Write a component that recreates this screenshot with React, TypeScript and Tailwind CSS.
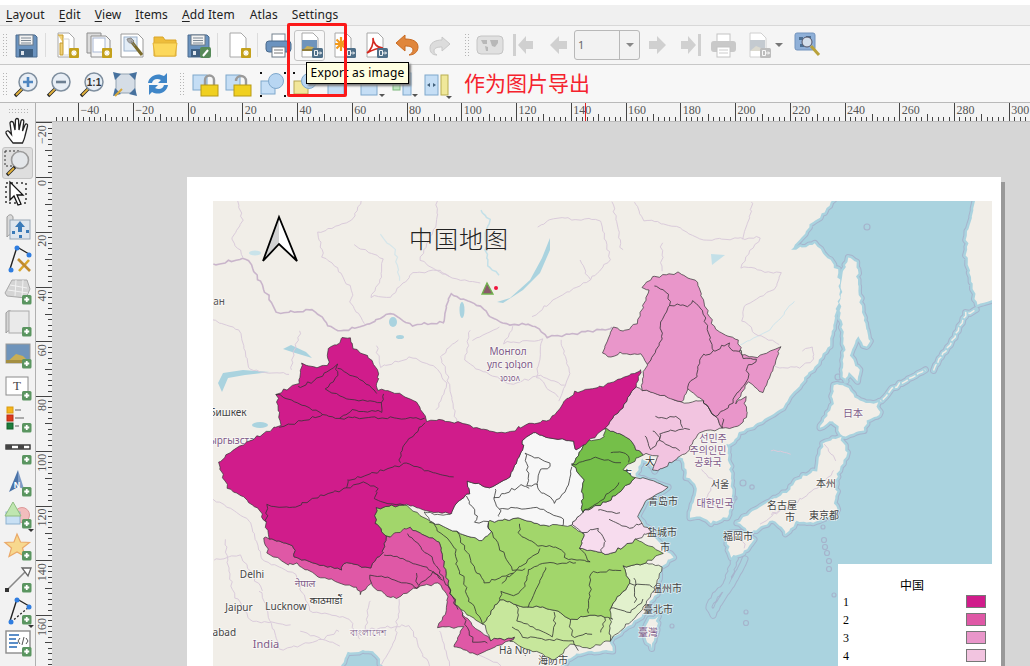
import React from 'react';

const noise = (x: number, y: number, s: number) =>
  Math.sin(x * 0.9 + y * 0.4 + s) * 0.6 + Math.sin(x * 0.31 - y * 0.77 + s * 2) * 0.8 + Math.sin(x * 1.7 + y * 1.3 + s * 3) * 0.35;

// coarse outlines get a small position based wobble, shared edges stay identical
const pts = (p: number[][], closed = true) => {
  const out: string[] = [];
  const last = closed ? p.length : p.length - 1;
  for (let i = 0; i < last; i++) {
    const a = p[i];
    const b = p[(i + 1) % p.length];
    const n = Math.max(1, Math.ceil(Math.hypot(b[0] - a[0], b[1] - a[1]) / 4));
    for (let k = 0; k < n; k++) {
      const x = a[0] + ((b[0] - a[0]) * k) / n;
      const y = a[1] + ((b[1] - a[1]) * k) / n;
      out.push(`${(x + noise(x, y, 1)).toFixed(1)},${(y + noise(x, y, 2)).toFixed(1)}`);
    }
  }
  if (!closed) {
    const e = p[p.length - 1];
    out.push(`${(e[0] + noise(e[0], e[1], 1)).toFixed(1)},${(e[1] + noise(e[0], e[1], 2)).toFixed(1)}`);
  }
  return out.join(' ');
};

const LAND = [[205,195],[835,195],[825,212],[810,225],[795,246],[792,250],[803,247],[815,244],[825,255],[838,270],[840,290],[838,305],[833,325],[830,345],[820,360],[805,378],[780,410],[755,425],[740,432],[735,440],[727,445],[730,470],[733,497],[727,517],[710,523],[700,517],[690,517],[697,487],[687,477],[683,457],[667,455],[655,470],[642,457],[635,477],[668,488],[647,500],[637,517],[650,530],[663,548],[673,557],[660,567],[657,593],[640,617],[610,640],[613,650],[577,653],[553,672],[387,672],[373,650],[347,653],[340,672],[205,672]];
const ISLANDS = [
  [[978,192],[972,215],[967,232],[967,258],[972,285],[977,305],[998,298],[998,192]],
  [[848,258],[857,263],[858,287],[863,313],[870,342],[867,347],[857,337],[850,357],[860,370],[857,380],[848,373],[845,382],[842,370],[845,350],[840,310],[842,273]],
  [[833,385],[845,387],[863,403],[877,403],[880,415],[867,420],[863,430],[843,437],[833,420],[820,428],[833,403]],
  [[840,437],[847,453],[837,473],[835,503],[837,513],[813,523],[797,520],[787,533],[773,520],[750,533],[737,523],[750,513],[767,503],[790,490],[797,480],[817,470],[823,443]],
  [[727,533],[750,533],[753,540],[743,553],[730,557],[728,543]],
  [[658,617],[655,637],[652,648],[643,633],[650,620]],
];
const M1 = [[343,337],[350,338],[353,348],[367,355],[378,370],[377,390],[400,393],[417,403],[427,420],[458,422],[480,430],[508,433],[525,425],[550,420],[564,402],[575,392],[600,387],[642,370],[636,387],[628,398],[620,410],[603,430],[577,450],[573,442],[550,437],[533,433],[522,440],[523,450],[510,477],[490,488],[467,482],[470,493],[463,497],[453,508],[452,515],[427,510],[403,505],[377,508],[375,523],[387,537],[382,553],[370,567],[343,563],[340,570],[317,563],[295,557],[293,545],[270,538],[265,523],[258,508],[228,488],[218,463],[233,450],[257,437],[280,425],[277,394],[298,383],[303,363],[317,367],[328,365],[328,348],[340,343]];
const M2 = [[263,538],[270,538],[293,545],[295,557],[317,563],[340,570],[343,563],[370,567],[382,553],[387,537],[410,527],[440,543],[447,577],[450,593],[460,610],[467,620],[490,640],[515,638],[477,655],[453,647],[462,627],[438,627],[447,610],[447,593],[438,583],[417,587],[397,598],[387,597],[370,583],[360,595],[357,587],[317,577],[297,563],[287,565],[268,553]];
const G2 = [[377,508],[403,505],[430,520],[457,532],[483,540],[490,532],[487,522],[517,518],[537,525],[570,525],[585,533],[580,547],[608,555],[635,540],[662,553],[645,563],[623,567],[630,583],[610,607],[612,620],[605,617],[590,615],[570,620],[558,610],[517,605],[500,600],[483,623],[460,610],[450,593],[447,577],[440,543],[410,527],[405,535],[387,537],[375,523]];
const G3 = [[483,623],[500,600],[517,605],[558,610],[570,620],[590,615],[605,617],[612,600],[610,640],[590,648],[570,645],[555,660],[540,652],[530,650],[510,640],[515,638],[490,640]];
const G4 = [[610,607],[630,583],[623,567],[645,563],[662,567],[653,590],[640,613],[610,640]];
const G1 = [[605,427],[627,437],[642,455],[628,465],[622,470],[635,478],[610,500],[582,512],[583,480],[573,465],[585,442],[603,438]];
const W = [[522,440],[533,433],[550,437],[573,442],[577,450],[585,442],[573,465],[583,480],[582,512],[572,525],[537,525],[517,518],[487,522],[490,532],[483,540],[457,532],[433,522],[423,513],[450,515],[453,508],[463,497],[470,493],[467,482],[490,488],[510,477],[523,450]];
const P3 = [[603,352],[613,328],[623,332],[637,323],[650,290],[643,287],[652,277],[677,273],[697,282],[707,310],[715,330],[738,340],[742,355],[757,357],[780,347],[772,370],[763,392],[748,383],[735,403],[745,397],[747,417],[737,427],[723,428],[715,417],[703,400],[687,390],[682,403],[642,390],[643,372],[648,363],[640,355],[620,353],[612,357]];
const P4 = [[642,390],[685,403],[703,400],[715,417],[723,428],[700,432],[687,453],[682,455],[660,470],[653,470],[658,455],[642,455],[627,437],[605,427],[620,410],[628,398],[636,387]];
const P5 = [[635,478],[650,480],[668,488],[647,500],[637,517],[650,532],[635,540],[608,555],[580,547],[585,533],[572,525],[582,512],[610,500]];
const LINES = [
  [[337,365],[315,380],[298,388]],[[337,365],[337,375],[326,390],[343,398],[382,403],[382,412],[353,410],[340,418]],
  [[338,367],[360,380],[377,392]],[[382,403],[383,393]],[[277,394],[323,415],[340,418],[425,418]],[[280,427],[323,415]],
  [[425,423],[402,447],[400,463]],[[350,480],[407,463],[433,472],[453,477]],[[349,480],[347,488],[363,482],[377,488],[375,500],[403,505]],
  [[347,488],[317,497],[293,508],[268,505],[265,523]],
  [[383,555],[407,560],[427,567],[440,578]],[[370,575],[370,583]],[[417,587],[433,573],[442,580]],[[370,575],[410,583],[417,587]],[[417,573],[417,585]],
  [[462,613],[473,642],[488,643]],[[407,533],[433,560],[448,587],[457,610]],
  [[430,522],[455,547],[457,567],[463,577],[468,598],[483,623]],[[457,532],[477,573],[485,583],[513,573]],[[487,523],[497,543],[513,570],[525,570]],
  [[518,535],[538,545],[563,550],[565,557],[590,563],[580,547]],[[518,535],[520,523]],[[502,583],[513,573],[540,550]],
  [[502,592],[515,595],[525,587],[528,570],[543,563],[577,563]],[[547,567],[533,597],[528,607]],[[590,573],[590,597],[587,613]],[[590,573],[620,570]],[[502,592],[500,600]],
  [[517,605],[518,620],[537,628],[553,637],[555,613]],[[570,620],[572,637],[592,633]],[[513,627],[523,637],[553,640],[573,640],[577,650]],[[605,617],[600,633]],
  [[610,607],[630,613],[643,600]],[[630,583],[653,587]],[[635,577],[635,603]],
  [[655,285],[668,295],[670,305],[688,305],[693,302],[703,310],[713,352],[700,357],[697,377],[688,383],[687,390]],[[670,305],[660,322],[662,340],[648,363]],
  [[713,352],[728,343],[733,352],[742,350],[742,358],[757,360]],[[757,360],[747,367],[748,378],[735,397],[733,403],[715,417],[703,400]],[[723,418],[723,428]],
  [[653,430],[660,440],[650,450],[645,435]],[[690,428],[660,433],[660,440],[680,450]],[[655,418],[677,417],[683,427]],
  [[610,520],[630,528],[642,523]],[[583,533],[597,528],[605,540],[600,552]],[[597,510],[620,513]],
  [[525,453],[550,462],[550,467],[540,470],[537,487],[555,503],[567,488],[572,467]],[[525,453],[528,470],[528,485],[537,485]],[[495,498],[522,485],[530,487]],
  [[495,488],[495,503],[500,508],[498,518]],[[500,508],[537,508],[563,520],[563,525]],[[467,497],[477,517],[475,522],[487,522]],
  [[572,465],[597,457],[620,463]],[[610,452],[627,453],[630,462]],[[620,483],[598,503],[582,512]],
];
const BORDERS = [[[213,265],[247,258],[277,313],[313,310],[337,332],[367,325],[390,313],[413,325],[443,323],[450,295],[480,307],[500,323],[533,325],[547,337],[600,330],[612,328]]];
const ADMIN = [
  [[237,201],[243,220],[232,240],[243,257]],[[362,201],[353,220],[318,233],[323,257],[337,268],[353,293],[350,303],[365,323]],
  [[355,245],[383,260],[380,280],[370,297],[390,297],[413,273],[440,270],[450,277],[420,260],[437,223],[437,201]],[[450,277],[480,283]],
  [[538,227],[553,218],[600,220]],[[533,317],[553,300],[590,280],[580,260]],[[457,340],[440,357],[447,373],[457,423]],[[513,327],[503,343],[542,340],[537,377],[557,397]],[[473,340],[500,327]],
  [[377,345],[380,367],[413,357],[437,367],[447,387],[437,410]],[[635,201],[643,220],[680,227],[700,240],[760,238],[740,267],[780,273],[777,287],[743,307],[743,320],[755,333],[780,345]],
  [[802,350],[813,347],[813,360],[797,368],[773,367]],[[753,201],[743,240]],[[662,243],[662,270]],[[613,201],[618,230],[622,250]],[[600,220],[610,260],[590,280]],[[213,320],[240,330],[250,370],[290,375]],[[300,330],[290,370]],[[470,330],[465,360],[480,370],[510,385],[540,375],[565,385]],[[560,340],[570,375],[560,400]],
  [[213,500],[250,520],[262,560],[295,575],[310,610],[350,620],[360,640]],[[225,540],[232,590],[250,620],[290,625]],[[260,590],[280,650],[320,640],[340,630]],[[370,600],[365,630],[410,625],[420,650],[430,666]],[[400,600],[395,640],[380,666]],[[440,630],[450,666]],[[480,655],[500,666]],[[213,560],[240,555],[262,590]],[[300,630],[340,645]],
  [[770,450],[790,455]],[[700,470],[715,480],[705,500],[720,510]],[[770,515],[800,500],[820,485],[835,470]],[[760,525],[780,510]],[[825,445],[835,460]],[[740,535],[745,548]],
];
const LABELS: [string, number, number, string, number][] = [
  ['Монгол',508,355,'#7e5a88',10],['улс ʇolʇon',510,368,'#7e5a88',10],['ʇoʇoʌ',510,381,'#7e5a88',8],['ан',219,305,'#555',10],['Бишкек',228,416,'#444',10],['ыргызста',232,444,'#7e5a88',10],
  ['Delhi',252,578,'#444',10],['नेपाल',305,587,'#7e5a88',10],['काठमाडौं',326,604,'#333',10],['Jaipur',239,611,'#444',10],['Lucknow',286,610,'#444',10],['labad',223,636,'#444',10],['India',266,648,'#7e5a88',11],['বাংলাদেশ',368,636,'#7e5a88',9],['Hà Nội',515,654,'#444',10],['海防市',553,664,'#444',10],
  ['大',650,465,'#333',10],['市',627,478,'#333',10],['선민주',713,442,'#7e5a88',10],['주의인민',708,454,'#7e5a88',10],['공화국',708,466,'#7e5a88',10],['서울',720,488,'#444',10],['대한민국',715,507,'#7e5a88',10],['青岛市',663,505,'#444',10],['盐城市',662,536,'#444',10],['市',665,551,'#444',10],['温州市',667,592,'#444',10],['臺北市',658,613,'#444',10],['臺灣',648,636,'#7e5a88',10],['福岡市',738,540,'#444',10],['名古屋',782,509,'#444',10],['市',790,521,'#444',10],['東京都',824,519,'#444',10],['本州',826,487,'#444',10],['日本',853,417,'#7e5a88',10],
];
const DOTS = [[743,483,3],[752,487,2.2],[823,527,2],[824,540,2.5],[825,547,2.5],[827,553,2.5],[829,561,2.5],[829,569,2.5],[834,595,2],[672,626,2],[746,623,2.5],[746,612,2],[867,227,3],[819,256,3],[838,377,3],[735,498,2],[772,515,1.5],[791,510,1.5]];
const TOP_TICKS = Array.from({ length: 192 }, (_, i) => i * 2 - 52);
const LEFT_TICKS = Array.from({ length: 160 }, (_, i) => i * 2 - 28);

const Plus = () => (
  <g>
    <rect x="18" y="18" width="9.500" height="9.500" rx="1.500" fill="#5a9560" />
    <path d="M22.750 20v5M20.250 22.500h5" stroke="#fff" strokeWidth="1.800" />
  </g>
);
const Gear = () => (
  <g>
    <rect x="17" y="17" width="10" height="10" rx="1" fill="#c4a11c" />
    <path d="M22 19v6M19 22h6M20 20l4 4M24 20l-4 4" stroke="#fff" strokeWidth="1.100" />
  </g>
);
const Exp = ({ grey }: { grey?: boolean }) => (
  <g>
    <rect x="16" y="17" width="11" height="10" rx="1.500" fill={grey ? '#bdbdbd' : '#4f6f88'} />
    <path d="M18.500 19.500v5M18.500 19.500h3v5h-3M21.500 22h4M24 20.500l1.500 1.500-1.500 1.500" stroke="#fff" strokeWidth="0.900" fill="none" />
  </g>
);
const Page = ({ grey }: { grey?: boolean }) => (
  <path d="M6 2h11l5 5v19H6z" fill="#fff" stroke={grey ? '#d0d0d0' : '#a8a8a8'} />
);
const Floppy = () => (
  <g>
    <path d="M4 4h19l2 2v20H4z" fill="#6b93bf" stroke="#4c6d90" />
    <rect x="7" y="4" width="14" height="10" fill="#f2f2f2" stroke="#6c7a88" />
    <path d="M9 7h10M9 9.5h10M9 12h10" stroke="#7c8894" />
    <rect x="7" y="18" width="14" height="8" fill="#3f5f80" />
    <rect x="9" y="20" width="3" height="4" fill="#dfe6ee" />
  </g>
);
const Mag = ({ children }: { children?: React.ReactNode }) => (
  <g>
    <path d="M3 26l8-8" stroke="#222" strokeWidth="3.4" />
    <path d="M4 25l6-6" stroke="#e3b23c" strokeWidth="1.8" />
    <circle cx="16" cy="12" r="9" fill="#e8eef5" stroke="#7f8f9f" strokeWidth="1.5" />
    {children}
  </g>
);

const ICONS: Record<string, React.ReactNode> = {
  save: <Floppy />,
  newl: <g><Page /><path d="M6 4h5v20h-3V12h3" fill="#f2d27a" stroke="#c49a2c" /><path d="M11 8h6v16h-6" fill="none" stroke="#d5d5d5" /><Gear /></g>,
  dup: <g><path d="M2 2h14v20H2z" fill="#dcdcdc" stroke="#8e8e8e" /><path d="M6 5h15l4 4v17H6z" fill="#f6f6f6" stroke="#8e8e8e" /><rect x="8" y="7" width="12" height="14" fill="#fff" stroke="#a9b8d4" /><Gear /></g>,
  mgr: <g><path d="M3 3h17l5 5v18H3z" fill="#fff" stroke="#9a9a9a" /><rect x="6" y="6" width="13" height="14" fill="#e2ecf6" stroke="#9cb2cc" /><path d="M13 10l11 14" stroke="#7a6a2a" strokeWidth="3" /><path d="M13 10l4 5M9 8c1 5 5 5 7 2l-3-3z" stroke="#888" fill="#aaa" /></g>,
  open: <g><path d="M3 6h9l2 3h11v16H3z" fill="#eebd3b" stroke="#d9a52a" /><path d="M2 12h24l-2 13H4z" fill="#fcd85c" stroke="#e3b43a" /></g>,
  saveas: <g><Floppy /><rect x="16" y="16" width="11" height="11" rx="2" fill="#568a58" /><path d="M19 25l5-6" stroke="#fff" strokeWidth="2" /></g>,
  newr: <g><Page /><Gear /></g>,
  print: <g><rect x="8" y="3" width="13" height="8" fill="#fff" stroke="#77838f" /><rect x="2" y="10" width="25" height="11" rx="3" fill="#6b93bf" stroke="#4a6a8c" /><rect x="8" y="16" width="13" height="10" fill="#fff" stroke="#6a7886" /><path d="M10 19h9M10 22h9" stroke="#777" /></g>,
  img: <g><Page /><rect x="6" y="9" width="15" height="11" fill="#6f94bb" /><path d="M6 20l5-5 6 1 4 4z" fill="#c8ae55" /><path d="M6 20v-2h15v2z" fill="#8f7d3c" /><Exp /></g>,
  svg: <g><Page /><path d="M12 6v14M6 13h12M7.5 8.5l9 9M16.5 8.5l-9 9" stroke="#f29a1e" strokeWidth="2.2" /><Exp /></g>,
  pdf: <g><Page /><path d="M6 22c4-3 7-9 6-15 0 5 4 10 10 10-6 0-11 2-16 5z" fill="none" stroke="#d4281f" strokeWidth="1.6" /><Exp /></g>,
  undo: <path d="M12 4L3 12l9 8v-5c5 0 8 1 8 4 0 2-2 4-4 5 6 0 9-4 9-8 0-6-6-8-13-8z" fill="#e0863c" stroke="#c86a22" />,
  redo: <path d="M16 6l8 7-8 7v-4c-5 0-8 1-8 4 0 2 1 3 3 4-5 0-7-3-7-7 0-5 5-8 12-8z" fill="#dcdcdc" stroke="#c8c8c8" />,
  atlas: <g><rect x="1" y="5" width="26" height="18" rx="4" fill="#e0e0e0" stroke="#c4c4c4" /><path d="M5 9h6v4H7zM14 9h8v3l-3 4-3-1zM9 15l3 1v4h-2z" fill="#b8b8b8" /></g>,
  first: <path d="M4 3v22h3V3zM9 14l8-9v5h7v8h-7v5z" fill="#d0d0d0" />,
  prev: <path d="M6 14l9-9v5h8v8h-8v5z" fill="#d0d0d0" />,
  next: <path d="M22 14l-9-9v5H5v8h8v5z" fill="#d0d0d0" />,
  last: <path d="M24 3v22h-3V3zM19 14l-8-9v5H4v8h7v5z" fill="#d0d0d0" />,
  printg: <g><rect x="8" y="3" width="13" height="8" fill="#fff" stroke="#c4c4c4" /><rect x="2" y="10" width="25" height="11" rx="3" fill="#c9c9c9" /><rect x="8" y="16" width="13" height="10" fill="#fff" stroke="#c4c4c4" /><path d="M10 19h9M10 22h9" stroke="#ccc" /></g>,
  imgg: <g><Page grey /><rect x="6" y="9" width="15" height="11" fill="#c4cad0" /><path d="M6 20l6-5 5 2 4 3z" fill="#dcdad0" /><Exp grey /></g>,
  atlset: <g><rect x="2" y="2" width="20" height="17" rx="2" fill="#8fb0d8" stroke="#7393bd" /><path d="M6 6h4v3H6zM13 5h5v4h-5zM7 13h4v3H7z" fill="#4c6f93" /><circle cx="14" cy="11" r="5" fill="#d5e0ec" stroke="#556" /><path d="M18 15l8 9" stroke="#b9a23a" strokeWidth="3" /></g>,
  zin: <Mag><path d="M16 7v10M11 12h10" stroke="#4f86c0" strokeWidth="2.6" /></Mag>,
  zout: <Mag><path d="M11 12h10" stroke="#6c7f92" strokeWidth="2.6" /></Mag>,
  z11: <Mag><text x="16" y="16" fontSize="10" textAnchor="middle" fill="#333" fontWeight="700" fontFamily="Liberation Sans">1:1</text></Mag>,
  zfull: <g><rect x="5" y="4" width="19" height="19" fill="#d5dde6" stroke="#94a3b2" /><path d="M2 2l8 2-6 6zM26 2l-2 8-6-6zM26 26l-8-2 6-6zM2 26l2-8 6 6z" fill="#46719e" /><path d="M4 26l7-7" stroke="#d9a93a" strokeWidth="2" /></g>,
  refresh: <g><path d="M4 13C5 6 13 2 20 6l3-3v10h-9l3-3c-4-2-8-1-9 3z" fill="#3f86c8" /><path d="M24 15c-1 7-9 11-16 7l-3 3V15h9l-3 3c4 2 8 1 9-3z" fill="#3f86c8" /></g>,
  lock: <g><rect x="1" y="5" width="14" height="15" fill="#c5def5" stroke="#7fa8cc" /><path d="M13 15v-5a4.500 4.500 0 0 1 9 0v5" fill="none" stroke="#9a9a9a" strokeWidth="2.4" /><rect x="9" y="15" width="17" height="11" fill="#f0d020" stroke="#b89a14" /></g>,
  unlock: <g><rect x="1" y="5" width="14" height="15" fill="#c5def5" stroke="#7fa8cc" /><path d="M11 11a5 5 0 0 1 10 0v4" fill="none" stroke="#9a9a9a" strokeWidth="2.4" /><rect x="9" y="15" width="17" height="11" fill="#f0d020" stroke="#b89a14" /></g>,
  group: <g><rect x="2" y="11" width="14" height="13" fill="#c5def5" stroke="#7fa8cc" /><circle cx="17" cy="11" r="7.500" fill="#b8d6f2" stroke="#7fa8cc" /><path d="M1 2h2v2H1zM25 2h2v2h-2zM1 25h2v2H1zM25 25h2v2h-2z" fill="#111" /></g>,
  ungroup: <g><rect x="2" y="11" width="14" height="13" fill="#f2e79a" stroke="#b5a656" /><circle cx="17" cy="11" r="7.500" fill="#b8d6f2" stroke="#7fa8cc" /><path d="M1 2h2v2H1zM25 2h2v2h-2zM1 25h2v2H1zM25 25h2v2h-2z" fill="#111" /></g>,
  raise: <g><rect x="3" y="10" width="16" height="15" fill="#c5def5" stroke="#7fa8cc" /><rect x="9" y="4" width="13" height="10" fill="#c0ae58" /></g>,
  lower: <g><rect x="3" y="10" width="16" height="15" fill="#c5def5" stroke="#7fa8cc" /><path d="M21 24l3 3 3-3z" fill="#555" /></g>,
  alignb: <g><rect x="2" y="8" width="7" height="12" fill="#bfe8bf" stroke="#7fb87f" /><rect x="12" y="3" width="8" height="22" fill="#c5def5" stroke="#7fa8cc" /><path d="M21 24l3 3 3-3z" fill="#555" /></g>,
  dist: <g><rect x="1" y="5" width="13" height="20" fill="#c5def5" stroke="#7fa8cc" /><path d="M3 15l3-2v4zM12 15l-3-2v4z" fill="#44617c" /><rect x="17" y="5" width="7" height="20" fill="#f0e89a" stroke="#b8ae50" /><path d="M22 26l3 3 3-3z" fill="#555" /></g>,
  hand: <path d="M9 26c-2-3-6-7-7-10-.5-2 2-3 3.500-1l2 2.500L6 6c0-2 3-2 3.500 0l1.500 7 .5-10c0-2 3-2 3 0l.5 10 2-9c.5-2 3-1.500 2.800.5L18.500 14l2.500-6c1-2 3-1 2.500 1L21 19c-.5 3-1.500 5-2.500 7z" fill="#fff" stroke="#222" strokeWidth="1.300" />,
  zoomsel: <g><path d="M1 2h14v15H1z" fill="none" stroke="#333" strokeDasharray="2 2" /><circle cx="16" cy="11" r="8.500" fill="#e4e7ea" stroke="#9a9a9a" strokeWidth="1.600" /><path d="M3 26l8-8" stroke="#222" strokeWidth="3.200" /><path d="M4 25l6-6" stroke="#e3b23c" strokeWidth="1.800" /></g>,
  sel: <g><path d="M2 2h20v20H2z" fill="none" stroke="#333" strokeDasharray="2 3" strokeWidth="1.500" /><path d="M6 1v18l4-4 4 9 3-1-4-9h6z" fill="#fff" stroke="#111" strokeWidth="1.300" /></g>,
  movec: <g><path d="M3 4c2-3 5-3 6 0v20c-1-3-4-3-6 0z" fill="#d9d9d9" stroke="#999" /><rect x="6" y="7" width="20" height="19" fill="#dfe6ee" stroke="#99a7b5" /><path d="M16 8l-5 6h3v5h4v-5h3zM8 18h3v3H8zM22 17h3v3h-3zM15 22h3v3h-3z" fill="#3a7ab8" /></g>,
  nodes: <g><path d="M13 2L25 9M13 2L6 24" stroke="#222" strokeWidth="1.400" /><circle cx="13" cy="3" r="2.500" fill="#2f7de0" /><circle cx="25" cy="10" r="2.500" fill="#2f7de0" /><circle cx="7" cy="25" r="2.500" fill="#2f7de0" /><path d="M15 26l10-11" stroke="#d8a62c" strokeWidth="2.600" /><path d="M14 14l12 12" stroke="#c08a2c" strokeWidth="2.600" /></g>,
  map3d: <g><path d="M8 3h15l3 9-4 9-19-2-2-3z" fill="#d5d5d5" stroke="#aaa" /><path d="M6 8l17 3M4 13l20 3M12 3l-1 16M19 3l-1 17" stroke="#f2f2f2" /><Plus /></g>,
  layout: <g><path d="M2 4c2-3 5-3 6 0v20c-1-3-4-3-6 0z" fill="#d5d5d5" stroke="#999" /><rect x="5" y="2" width="20" height="22" fill="#eaeaea" stroke="#aaa" /><Plus /></g>,
  pict: <g><rect x="2" y="3" width="24" height="19" fill="#6f94bb" stroke="#999" /><path d="M2 22l10-9 7 2 7 7z" fill="#c9ae55" /><path d="M2 19h24v3H2z" fill="#a48f42" /><Plus /></g>,
  label: <g><rect x="2" y="4" width="22" height="18" fill="#fff" stroke="#8c8c8c" /><text x="13" y="17" fontSize="13" textAnchor="middle" fill="#444" fontFamily="Liberation Serif">T</text><Plus /></g>,
  legend: <g><rect x="3" y="2" width="6" height="6" fill="#f5b51b" stroke="#d89a10" /><rect x="3" y="10" width="6" height="6" fill="#dd3a1c" stroke="#b92a10" /><rect x="3" y="18" width="6" height="6" fill="#1c7d3c" stroke="#126028" /><path d="M11 5h6M11 13h9M11 21h4" stroke="#aaa" strokeWidth="2" /><Plus /></g>,
  scale: <g><rect x="2" y="8" width="24" height="4" fill="#fff" stroke="#333" strokeWidth="1.400" /><path d="M2 8h6v4H2zM14 8h6v4h-6z" fill="#444" /><Plus /></g>,
  north: <g><path d="M14 1L5 23l9-5z" fill="#4a73a8" /><path d="M14 1l6 19-6-2z" fill="#7e9cc6" /><text x="13" y="19" fontSize="9" fill="#fff" textAnchor="middle" fontWeight="700" fontFamily="Liberation Sans">N</text><Plus /></g>,
  shape: <g><circle cx="18" cy="14" r="7.500" fill="#f2bdbd" stroke="#d99" /><rect x="2" y="11" width="14" height="12" fill="#c8e0f4" stroke="#8eb2d0" /><path d="M9 1L1 15h16z" fill="#bfe6b0" stroke="#8fbd80" /><Plus /><path d="M24 28h6l-3 3z" fill="#333" /></g>,
  star: <g><path d="M13 1l3.500 8 9 .500-7 5.500 2.500 8.500L13 19l-8 4.500L7.500 15 1 9.500l9-.500z" fill="#f7d88e" stroke="#eaa868" strokeWidth="1.200" /><Plus /></g>,
  arrow: <g><path d="M3 25L22 6" stroke="#888" strokeWidth="1.600" /><path d="M18 3h9l-3 8z" fill="#fff" stroke="#666" strokeWidth="1.300" /><rect x="1" y="23" width="4" height="4" fill="#333" /><Plus /></g>,
  nodeadd: <g><path d="M13 2L25 9M13 2L6 24" stroke="#222" strokeWidth="1.400" /><path d="M7 25L25 10" stroke="#222" strokeDasharray="2 2" strokeWidth="1.300" /><circle cx="13" cy="3" r="2.500" fill="#2f7de0" /><circle cx="25" cy="10" r="2.500" fill="#2f7de0" /><circle cx="7" cy="25" r="2.500" fill="#2f7de0" /><Plus /><path d="M24 28h6l-3 3z" fill="#333" /></g>,
  html: <g><rect x="2" y="2" width="24" height="22" fill="#fff" stroke="#8c8c8c" strokeWidth="1.400" /><path d="M5 6h10M5 10h7M5 14h9M5 18h8" stroke="#5b8ec8" strokeWidth="1.800" /><path d="M16 9l-2 3 2 3M22 9l2 3-2 3M20 8l-2 8" fill="none" stroke="#555" /><Plus /></g>,
};

const Icon = ({ name }: { name: string }) => (
  <svg width="28" height="28" viewBox="0 0 28 28" className="overflow-visible">
    {ICONS[name]}
  </svg>
);

const Tool = ({ name, className }: { name: string; className: string }) => (
  <div className={`flex h-[30px] shrink-0 items-center justify-center ${className}`}>
    <Icon name={name} />
  </div>
);

const Grip = ({ className }: { className: string }) => (
  <div className={`shrink-0 bg-[radial-gradient(#b5b5b5_0.7px,transparent_0.8px)] bg-[length:3px_3px] ${className}`} />
);
const Sep = ({ className }: { className: string }) => <div className={`h-[24px] w-px shrink-0 bg-[#dcdcdc] ${className}`} />;

const TOP_ITEMS = [
  ['Layout', 'L', 'ml-[6px]'],
  ['Edit', 'E', 'ml-[14px]'],
  ['View', 'V', 'ml-[14px]'],
  ['Items', 'I', 'ml-[14px]'],
  ['Add Item', 'A', 'ml-[14px]'],
  ['Atlas', '', 'ml-[15px]'],
  ['Settings', '', 'ml-[14px]'],
];

const LEFT_TOOLS = ['hand', 'zoomsel', 'sel', 'movec', 'nodes', 'map3d', 'layout', 'pict', 'label', 'legend', 'scale', 'north', 'shape', 'star', 'arrow', 'nodeadd', 'html'];

const COAST = '#a6b4cc';
const SEA = '#aad3df';
const SHORE = '#f1eee8';
const CHAIN_A = [[877,405],[893,388],[925,370]];
const CHAIN_B = [[933,370],[948,347],[967,313],[977,310]];
const CHAIN_C = [[735,558],[725,585],[708,605],[712,615],[722,600],[745,560]];

const Chain = ({ p, land }: { p: number[][]; land?: boolean }) => (
  <g>
    <polyline points={pts(p, false)} fill="none" stroke={COAST} strokeWidth="7" strokeLinecap="round" strokeLinejoin="round" />
    <polyline points={pts(p, false)} fill="none" stroke={SEA} strokeWidth="5" strokeLinecap="round" strokeLinejoin="round" />
    {land ? <polyline points={pts(p, false)} fill="none" stroke={SHORE} strokeWidth="1.500" strokeDasharray="7 2" /> : null}
  </g>
);

const MapDrawing = () => (
  <svg width="779" height="465" viewBox="213 201 779 465" className="block bg-[#aad3df] [font-family:'Noto_Sans','Noto_Sans_CJK_SC',sans-serif]">
    {ISLANDS.map((p, i) => <polygon key={i} points={pts(p)} fill="none" stroke={COAST} strokeWidth="7" strokeLinejoin="round" />)}
    {DOTS.map((d, i) => <circle key={i} cx={d[0]} cy={d[1]} r={d[2]} fill="none" stroke={COAST} strokeWidth="1.200" />)}
    <Chain p={CHAIN_A} land />
    <Chain p={CHAIN_B} land />
    <Chain p={CHAIN_C} />
    <polygon points={pts(LAND)} fill="none" stroke={COAST} strokeWidth="7" strokeLinejoin="round" />
    <polygon points={pts(LAND)} fill="none" stroke={SEA} strokeWidth="5" strokeLinejoin="round" />
    {ISLANDS.map((p, i) => <polygon key={i} points={pts(p)} fill={SEA} stroke={SEA} strokeWidth="5" strokeLinejoin="round" />)}
    {ISLANDS.map((p, i) => <polygon key={i} points={pts(p)} fill={SHORE} />)}
    <polygon points={pts(LAND)} fill={SHORE} />
    <polygon points="550,238 542,258 530,280 510,298 497,302 503,303 523,290 540,273 550,250" fill={SEA} />
    <polygon points="218,383 223,373 243,370 270,372 245,375 228,378 222,392" fill={SEA} />
    <polygon points="283,349 292,352 312,358 306,352 291,345" fill={SEA} />
    <ellipse cx="393" cy="322" rx="4" ry="5" fill={SEA} />
    <ellipse cx="462" cy="310" rx="2.500" ry="8" fill={SEA} />
    <ellipse cx="400" cy="337" rx="4" ry="2" fill={SEA} />
    <ellipse cx="255" cy="253" rx="6" ry="2.500" fill="#c9e3ea" />
    <ellipse cx="260" cy="425" rx="8" ry="3" fill={SEA} />
    <polygon points="711,254 725,255 712,265" fill="#c3e0e8" />
    <polyline points={pts([[480,210],[490,220],[485,235],[488,265],[498,275]], false)} fill="none" stroke="#c3e0e8" strokeWidth="1.500" />
    <polyline points={pts([[380,235],[395,250],[400,280]], false)} fill="none" stroke="#d5e6ea" strokeWidth="1.200" />
    <polyline points={pts([[795,300],[770,330],[740,345]], false)} fill="none" stroke="#cfe5ec" strokeWidth="1" />
    {ADMIN.map((l, i) => <polyline key={i} points={pts(l, false)} fill="none" stroke="#dacbdb" strokeWidth="1" />)}
    {BORDERS.map((l, i) => <polyline key={i} points={pts(l, false)} fill="none" stroke="#c9b5cb" strokeWidth="1.600" />)}
    {LABELS.map(([t, x, y, c, s], i) => (
      <text key={i} x={x} y={y} fontSize={s} fill={c} textAnchor="middle" stroke="#ffffff" strokeOpacity="0.6" strokeWidth="1.500" paintOrder="stroke">{t}</text>
    ))}
    <polygon points={pts(G3)} fill="#c7e79c" stroke="#333" strokeWidth="0.700" />
    <polygon points={pts(G4)} fill="#e2f1cd" stroke="#333" strokeWidth="0.700" />
    <polygon points={pts(G2)} fill="#a2d66b" stroke="#333" strokeWidth="0.700" />
    <polygon points={pts(P5)} fill="#f7dcee" stroke="#333" strokeWidth="0.700" />
    <polygon points={pts(W)} fill="#f7f7f7" stroke="#333" strokeWidth="0.700" />
    <polygon points={pts(G1)} fill="#75bf49" stroke="#333" strokeWidth="0.700" />
    <polygon points={pts(P4)} fill="#f2c4e0" stroke="#333" strokeWidth="0.700" />
    <polygon points={pts(P3)} fill="#e996ca" stroke="#333" strokeWidth="0.700" />
    <polygon points={pts(M2)} fill="#df58a6" stroke="#333" strokeWidth="0.700" />
    <polygon points={pts(M1)} fill="#d01c8b" stroke="#333" strokeWidth="0.700" />
    {LINES.map((l, i) => <polyline key={i} points={pts(l, false)} fill="none" stroke="#333" strokeWidth="0.800" />)}
    <path d="M279 217L263 261L279 244z" fill="#d2d2d2" />
    <path d="M279 217L297 261L279 244z" fill="#fff" />
    <path d="M279 217L263 261L279 244L297 261z" fill="none" stroke="#000" strokeWidth="1.800" strokeLinejoin="miter" />
    <polygon points="487,283 482,294 493,294" fill="#8b5a6b" stroke="#70b24c" strokeWidth="1.300" />
    <circle cx="496" cy="288" r="2" fill="#f0143c" />
    <text x="459" y="248" fontSize="24" textAnchor="middle" fill="#222" letterSpacing="1" fontWeight="300" fontFamily="Noto Sans CJK SC">中国地图</text>
  </svg>
);

export default function App() {
  return (
    <div className="relative flex h-[666px] w-[1030px] flex-col overflow-hidden bg-[#d6d6d6] text-black [font-family:'Noto_Sans','Noto_Sans_CJK_SC',sans-serif]">
      <div className="h-[5px] shrink-0 bg-white" />
      <div className="flex h-[21px] shrink-0 items-center border-b border-[#d8d8d8] bg-[#f0f0f0] text-[12px] leading-none tracking-[0.1px] text-[#222]">
        {TOP_ITEMS.map(([t, u, m]) => (
          <span key={t} className={m}>
            {u ? <span className="underline underline-offset-2">{u}</span> : null}
            {u ? t.slice(1) : t}
          </span>
        ))}
      </div>
      {/* main toolbar */}
      <div className="flex h-[39px] shrink-0 items-center border-b border-[#c8c8c8] bg-[#f5f5f5]">
        <Grip className="ml-[2px] h-[24px] w-[5px]" />
        <Tool name="save" className="ml-[2px] w-[33px]" />
        <Sep className="ml-[3px]" />
        <Tool name="newl" className="ml-[3px] w-[33px]" />
        <Tool name="dup" className="w-[33px]" />
        <Tool name="mgr" className="w-[33px]" />
        <Tool name="open" className="w-[33px]" />
        <Tool name="saveas" className="w-[33px]" />
        <Sep className="ml-[3px]" />
        <Tool name="newr" className="ml-[3px] w-[33px]" />
        <Sep className="ml-[3px]" />
        <Tool name="print" className="ml-[3px] w-[33px]" />
        <div className="flex h-[31px] w-[31px] shrink-0 items-center justify-center rounded-[3px] border border-[#c4c4c4] bg-[#f8f8f8]">
          <Icon name="img" />
        </div>
        <Tool name="svg" className="ml-[3px] w-[30px]" />
        <Tool name="pdf" className="ml-[2px] w-[30px]" />
        <Tool name="undo" className="ml-[2px] w-[30px]" />
        <Tool name="redo" className="ml-[2px] w-[32px]" />
        <Grip className="ml-[8px] h-[24px] w-[5px]" />
        <Tool name="atlas" className="ml-[4px] w-[34px]" />
        <Tool name="first" className="ml-[1px] w-[30px]" />
        <Tool name="prev" className="ml-[4px] w-[32px]" />
        <div className="flex h-[30px] w-[66px] shrink-0 rounded-[3px] border border-[#b8b8b8] bg-[#f2f2f2] text-[11px] text-[#666]">
          <div className="flex w-[45px] items-center border-r border-[#b8b8b8] pl-[3px]">1</div>
          <div className="flex flex-1 items-center justify-center">
            <div className="h-0 w-0 border-x-[4px] border-t-[4px] border-x-transparent border-t-[#888]" />
          </div>
        </div>
        <Tool name="next" className="ml-[1px] w-[33px]" />
        <Tool name="last" className="w-[33px]" />
        <Tool name="printg" className="w-[32px]" />
        <Tool name="imgg" className="ml-[3px] w-[32px]" />
        <div className="ml-[1px] h-0 w-0 border-x-[4px] border-t-[4px] border-x-transparent border-t-[#777]" />
        <Tool name="atlset" className="ml-[8px] w-[32px]" />
      </div>
      {/* item toolbar */}
      <div className="flex h-[38px] shrink-0 items-center border-b border-[#b9b9b9] bg-[#f7f7f7]">
        <Grip className="ml-[2px] h-[24px] w-[5px]" />
        <Tool name="zin" className="ml-[2px] w-[33px]" />
        <Tool name="zout" className="w-[33px]" />
        <Tool name="z11" className="w-[33px]" />
        <Tool name="zfull" className="w-[33px]" />
        <Tool name="refresh" className="w-[33px]" />
        <Grip className="ml-[5px] h-[24px] w-[5px]" />
        <Tool name="lock" className="ml-[5px] w-[33px]" />
        <Tool name="unlock" className="w-[33px]" />
        <Tool name="group" className="ml-[1px] w-[33px]" />
        <Tool name="ungroup" className="w-[33px]" />
        <Tool name="raise" className="w-[33px]" />
        <Tool name="lower" className="w-[33px]" />
        <Tool name="alignb" className="w-[33px]" />
        <Tool name="dist" className="ml-[1px] w-[32px]" />
        <span className="ml-[10px] text-[21px] leading-none text-[#f5222d]">作为图片导出</span>
      </div>
      <div className="flex min-h-0 flex-1">
        {/* left tools */}
        <div className="flex w-[36px] shrink-0 flex-col items-center border-r border-[#b0b0b0] bg-[#f2f2f2] pt-[5px]">
          <Grip className="mb-[2px] h-[5px] w-[20px]" />
          {LEFT_TOOLS.map((n) => (
            <div key={n} className={n === 'zoomsel' ? 'flex h-[32px] w-[31px] shrink-0 items-center justify-center rounded-[3px] border border-[#c4c4c4] bg-[#dedede]' : 'flex h-[32px] w-[31px] shrink-0 items-center justify-center'}>
              <Icon name={n} />
            </div>
          ))}
        </div>
        <div className="flex min-w-0 flex-1 flex-col">
          {/* top ruler */}
          <div className="h-[19px] shrink-0 border-b border-[#bdbdbd] bg-[#f3f3f3]">
            <svg width="994" height="18" viewBox="36 0 994 18" className="block [font-family:'Liberation_Serif',serif]">
              {TOP_TICKS.map((v) => {
                const x = Math.round(187.5 + v * 2.7375) + 0.5;
                if (x < 52) return null;
                const h = v % 20 === 0 ? 18 : v % 10 === 0 ? 7 : 4;
                return <path key={v} d={`M${x} ${18 - h}V18`} stroke="#444" />;
              })}
              {TOP_TICKS.filter((v) => v % 20 === 0 && v >= -40).map((v) => (
                <text key={v} x={188 + v * 2.7375 + 2} y="11" fontSize="12" fill="#555">{v < 0 ? `−${-v}` : v}</text>
              ))}
              <path d="M585.500 0V18" stroke="#e02020" />
            </svg>
          </div>
          <div className="flex min-h-0 flex-1">
            {/* left ruler */}
            <div className="w-[16px] shrink-0 bg-[#f3f3f3]">
              <svg width="16" height="544" viewBox="0 122 16 544" className="block [font-family:'Liberation_Serif',serif]">
                {LEFT_TICKS.map((v) => {
                  const y = Math.round(177 + v * 2.7375) + 0.5;
                  const w = v % 20 === 0 ? 16 : v % 10 === 0 ? 7 : 4;
                  return <path key={v} d={`M${16 - w} ${y}H16`} stroke="#444" />;
                })}
                {LEFT_TICKS.filter((v) => v % 20 === 0 && v > -30).map((v) => (
                  <text key={v} x="10" y={177 + v * 2.7375 + 3} fontSize="12" fill="#555" textAnchor="end" transform={`rotate(-90 10 ${177 + v * 2.7375 + 3})`}>{v < 0 ? `−${-v}` : v}</text>
                ))}
              </svg>
            </div>
            {/* canvas */}
            <div className="min-w-0 flex-1 overflow-hidden bg-[#d6d6d6] pl-[135px] pt-[55px]">
              <div className="h-[600px] w-[814px] bg-white pl-[26px] pt-[24px] shadow-[4px_5px_0_#999999]">
                <div className="relative h-[465px] w-[779px]">
                  <MapDrawing />
                  <div className="absolute left-[625px] top-[363px] h-[102px] w-[154px] bg-white text-[12px] leading-none text-black [font-family:'Liberation_Serif','Noto_Sans_CJK_SC',serif]">
                    <div className="mt-[15px] pr-[6px] text-center text-[12px] leading-[14px]">中国</div>
                    <div className="mt-[2px] flex flex-col gap-[5px] pl-[5px] pr-[6px]">
                      {['#d01c8b', '#df58a6', '#e996ca', '#f2c4e0'].map((c, i) => (
                        <div key={c} className="flex h-[13px] items-center justify-between">
                          <span>{i + 1}</span>
                          <div className="h-[13px] w-[20px] border border-[#777]" style={{ backgroundColor: c }} />
                        </div>
                      ))}
                    </div>
                  </div>
                </div>
              </div>
            </div>
          </div>
        </div>
      </div>
      {/* tooltip and the red marking over the toolbar */}
      <div className="absolute left-[306px] top-[62px] flex h-[22px] w-[103px] items-center justify-center border border-black bg-[#ffffe1] text-[12px] leading-none tracking-[0.2px] text-black shadow-[2px_2px_2px_#777]">
        Export as image
      </div>
      <div className="absolute left-[287px] top-[23px] h-[74px] w-[60px] rounded-[2px] border-[3px] border-[#fb1a1a]" />
    </div>
  );
}
